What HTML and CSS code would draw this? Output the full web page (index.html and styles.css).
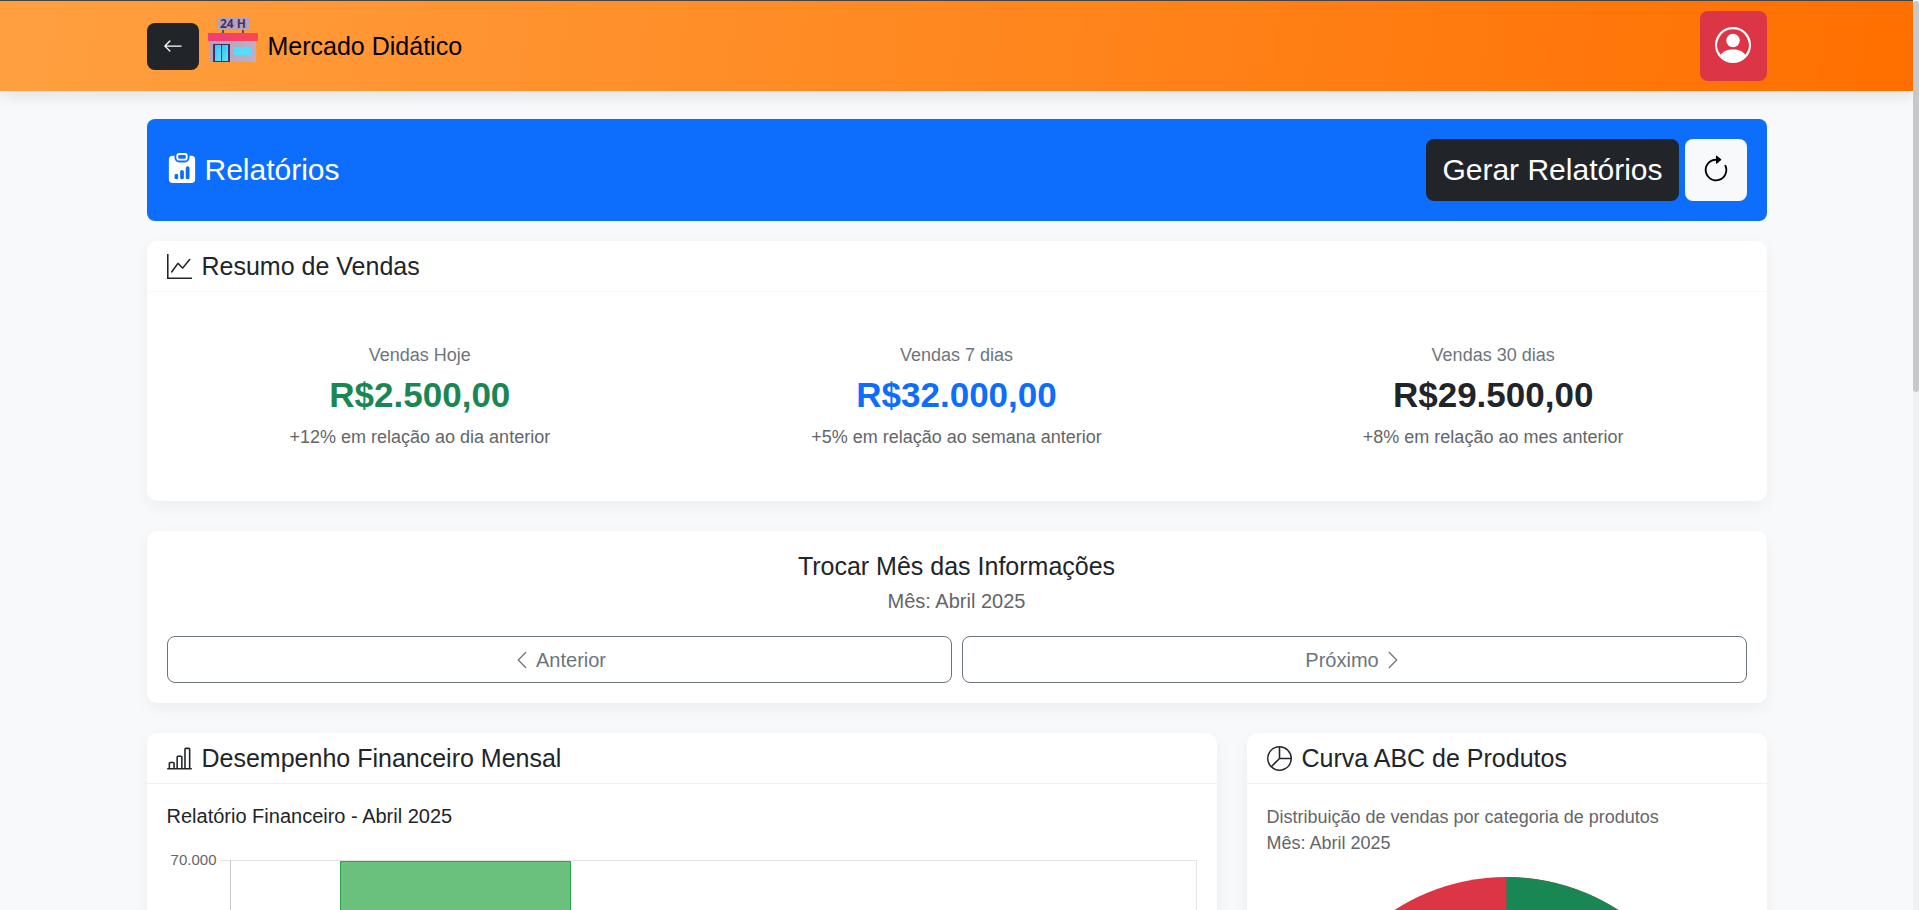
FILE: index.html
```html
<!DOCTYPE html>
<html lang="pt-BR">
<head>
<meta charset="utf-8">
<meta name="viewport" content="width=device-width, initial-scale=1">
<title>Mercado Didático - Relatórios</title>
<link rel="stylesheet" href="styles.css">
</head>
<body>
<header class="topbar">
  <div class="container topbar-inner">
    <button class="btn btn-dark btn-back" type="button" aria-label="Voltar">
      <svg class="icon" viewBox="0 0 16 16" aria-hidden="true"><path fill-rule="evenodd" d="M15 8a.5.5 0 0 0-.5-.5H2.707l3.147-3.146a.5.5 0 1 0-.708-.708l-4 4a.5.5 0 0 0 0 .708l4 4a.5.5 0 0 0 .708-.708L2.707 8.5H14.5A.5.5 0 0 0 15 8"/></svg>
    </button>
    <a class="brand" href="#">
      <svg class="brand-logo" viewBox="0 0 50 60" aria-hidden="true">
        <defs>
          <linearGradient id="roof"><stop offset="0" stop-color="#ee3c7d"/><stop offset="1" stop-color="#ff4653"/></linearGradient>
          <linearGradient id="wall"><stop offset="0" stop-color="#b3a2bd"/><stop offset="1" stop-color="#bfafc4"/></linearGradient>
          <linearGradient id="glass" x2="1" y2="1"><stop offset="0" stop-color="#35c3f3"/><stop offset="1" stop-color="#5fe3ff"/></linearGradient>
        </defs>
        <rect x="14" y="13" width="2" height="5" fill="#5b4a66"/>
        <rect x="34" y="13" width="2" height="5" fill="#5b4a66"/>
        <rect x="9" y="1" width="32" height="13" rx="1" fill="#b3a3b8"/>
        <text class="logo-text" x="25" y="12" text-anchor="middle">24 H</text>
        <rect x="2" y="23" width="46" height="23" fill="url(#wall)"/>
        <rect x="0" y="17" width="50" height="8" rx="1" fill="url(#roof)"/>
        <rect x="5" y="28" width="17" height="18" fill="#45306d"/>
        <rect x="7" y="29" width="6" height="16" fill="url(#glass)"/>
        <rect x="14" y="29" width="6" height="16" fill="url(#glass)"/>
        <rect x="26" y="31" width="17" height="8" rx="1" fill="#54dcfb"/>
      </svg>
      <span>Mercado Didático</span>
    </a>
    <button class="btn btn-user" type="button" aria-label="Perfil">
      <svg class="icon icon-user" viewBox="0 0 16 16" aria-hidden="true"><path d="M11 6a3 3 0 1 1-6 0 3 3 0 0 1 6 0"/><path fill-rule="evenodd" d="M0 8a8 8 0 1 1 16 0A8 8 0 0 1 0 8m8-7a7 7 0 0 0-5.468 11.37C3.242 11.226 4.805 10 8 10s4.757 1.225 5.468 2.37A7 7 0 0 0 8 1"/></svg>
    </button>
  </div>
</header>

<main class="container main">
  <section class="banner">
    <h1 class="banner-title">
      <svg class="icon icon-lg" viewBox="0 0 16 16" aria-hidden="true"><path d="M6.5 0A1.5 1.5 0 0 0 5 1.500v1A1.5 1.5 0 0 0 6.500 4h3A1.5 1.5 0 0 0 11 2.500v-1A1.5 1.5 0 0 0 9.500 0zm3 1a.5.5 0 0 1 .5.5v1a.5.5 0 0 1-.5.5h-3a.5.5 0 0 1-.5-.5v-1a.5.5 0 0 1 .5-.5z"/><path d="M4 1.500H3a2 2 0 0 0-2 2V14a2 2 0 0 0 2 2h10a2 2 0 0 0 2-2V3.500a2 2 0 0 0-2-2h-1v1A2.500 2.500 0 0 1 9.500 5h-3A2.500 2.500 0 0 1 4 2.500zM10 8a1 1 0 1 1 2 0v5a1 1 0 1 1-2 0zm-6 4a1 1 0 1 1 2 0v1a1 1 0 1 1-2 0zm4-3a1 1 0 0 1 1 1v3a1 1 0 1 1-2 0v-3a1 1 0 0 1 1-1"/></svg>
      Relatórios
    </h1>
    <div class="banner-actions">
      <button class="btn btn-dark btn-lg" type="button">Gerar Relatórios</button>
      <button class="btn btn-light btn-lg" type="button" aria-label="Atualizar">
        <svg class="icon icon-lg" viewBox="0 0 16 16" aria-hidden="true"><path fill-rule="evenodd" d="M8 3a5 5 0 1 0 4.546 2.914.5.5 0 0 1 .908-.417A6 6 0 1 1 8 2z"/><path d="M8 4.466V.534a.25.25 0 0 1 .41-.192l2.360 1.966c.12.1.12.284 0 .384L8.410 4.658A.25.25 0 0 1 8 4.466"/></svg>
      </button>
    </div>
  </section>

  <section class="card card-summary">
    <h2 class="card-header">
      <svg class="icon icon-md" viewBox="0 0 16 16" aria-hidden="true"><path fill-rule="evenodd" d="M0 0h1v15h15v1H0zm14.817 3.113a.5.5 0 0 1 .07.704l-4.500 5.500a.5.5 0 0 1-.74.037L7.060 6.767l-3.656 5.027a.5.5 0 0 1-.808-.588l4-5.500a.5.5 0 0 1 .758-.06l2.609 2.610 4.150-5.073a.5.5 0 0 1 .704-.07"/></svg>
      Resumo de Vendas
    </h2>
    <div class="stats">
      <div class="stat">
        <p class="stat-label">Vendas Hoje</p>
        <p class="stat-value green">R$2.500,00</p>
        <p class="stat-note">+12% em relação ao dia anterior</p>
      </div>
      <div class="stat">
        <p class="stat-label">Vendas 7 dias</p>
        <p class="stat-value blue">R$32.000,00</p>
        <p class="stat-note">+5% em relação ao semana anterior</p>
      </div>
      <div class="stat">
        <p class="stat-label">Vendas 30 dias</p>
        <p class="stat-value">R$29.500,00</p>
        <p class="stat-note">+8% em relação ao mes anterior</p>
      </div>
    </div>
  </section>

  <section class="card month">
    <h2 class="month-title">Trocar Mês das Informações</h2>
    <p class="month-current">Mês: Abril 2025</p>
    <div class="month-nav">
      <button class="btn btn-outline" type="button">
        <svg class="icon" viewBox="0 0 16 16" aria-hidden="true"><path fill-rule="evenodd" d="M11.354 1.646a.5.5 0 0 1 0 .708L5.707 8l5.647 5.646a.5.5 0 0 1-.708.708l-6-6a.5.5 0 0 1 0-.708l6-6a.5.5 0 0 1 .708 0"/></svg>
        Anterior
      </button>
      <button class="btn btn-outline" type="button">
        Próximo
        <svg class="icon" viewBox="0 0 16 16" aria-hidden="true"><path fill-rule="evenodd" d="M4.646 1.646a.5.5 0 0 1 .708 0l6 6a.5.5 0 0 1 0 .708l-6 6a.5.5 0 0 1-.708-.708L10.293 8 4.646 2.354a.5.5 0 0 1 0-.708"/></svg>
      </button>
    </div>
  </section>

  <div class="charts">
    <section class="card">
      <h2 class="card-header">
        <svg class="icon icon-md" viewBox="0 0 16 16" aria-hidden="true"><path d="M11 2a1 1 0 0 1 1-1h2a1 1 0 0 1 1 1v12h.5a.5.5 0 0 1 0 1H.5a.5.5 0 0 1 0-1H1v-3a1 1 0 0 1 1-1h2a1 1 0 0 1 1 1v3h1V7a1 1 0 0 1 1-1h2a1 1 0 0 1 1 1v7h1zm1 12h2V2h-2zm-3 0V7H7v7zm-5 0v-3H2v3z"/></svg>
        Desempenho Financeiro Mensal
      </h2>
      <div class="card-body">
        <h3 class="chart-title">Relatório Financeiro - Abril 2025</h3>
        <div class="bar-chart">
          <span class="axis-label">70.000</span>
          <span class="tick"></span>
          <div class="plot"><div class="bar"></div></div>
        </div>
      </div>
    </section>
    <section class="card">
      <h2 class="card-header">
        <svg class="icon icon-md" viewBox="0 0 16 16" aria-hidden="true"><path d="M7.500 1.018a7 7 0 0 0-4.790 11.566L7.500 7.793zm1 0V7.500h6.482A7 7 0 0 0 8.500 1.018M14.982 8.500H8.207l-4.790 4.790A7 7 0 0 0 14.982 8.500M0 8a8 8 0 1 1 16 0A8 8 0 0 1 0 8" fill-rule="evenodd"/></svg>
        Curva ABC de Produtos
      </h2>
      <div class="card-body">
        <p class="abc-text">Distribuição de vendas por categoria de produtos<br>Mês: Abril 2025</p>
        <svg class="pie" viewBox="0 0 400 400" role="img" aria-label="Curva ABC"><circle cx="200" cy="200" r="200" fill="#dc3545"/><path fill="#198754" d="M200 0A200 200 0 0 1 200 400Z"/></svg>
      </div>
    </section>
  </div>
</main>
<div class="scrollbar" aria-hidden="true"><div class="scrollbar-thumb"></div></div>
</body>
</html>
```

FILE: styles.css
```css
* {
  box-sizing: border-box;
}

html {
  height: 100%;
  overflow: hidden;
}

body {
  height: 100%;
  margin: 0;
  padding-right: 6px;
  overflow: hidden;
  background: #f8f9fa;
  color: #212529;
  font-family: "Liberation Sans", Arial, sans-serif;
  font-size: 20px;
  line-height: 30px;
}

h1, h2, h3, p {
  margin: 0;
  font-weight: 400;
}

.container {
  width: 100%;
  max-width: 1650px;
  margin: 0 auto;
  padding: 0 15px;
}

.icon {
  display: block;
  flex: none;
  width: 20px;
  height: 20px;
  fill: currentColor;
}

.icon-md {
  width: 25px;
  height: 25px;
}

.icon-lg {
  width: 30px;
  height: 30px;
}

.icon-user {
  width: 36px;
  height: 36px;
}

.topbar {
  border-top: 1px solid #444;
  background: linear-gradient(100deg, #ffa040, #ff6f00);
  box-shadow: 0 5px 15px rgba(0, 0, 0, 0.1);
}

.topbar-inner {
  display: flex;
  align-items: center;
  gap: 9px;
  padding-top: 10px;
  padding-bottom: 10px;
}

.brand {
  display: flex;
  flex: 1;
  align-items: center;
  gap: 10px;
  color: #000;
  font-size: 25px;
  text-decoration: none;
}

.brand-logo {
  width: 50px;
  height: 60px;
}

.logo-text {
  fill: #45306d;
  font-family: "Open Sans", sans-serif;
  font-size: 12px;
  font-weight: 700;
}

.btn {
  display: flex;
  align-items: center;
  justify-content: center;
  border: 1px solid transparent;
  border-radius: 8px;
  font: inherit;
  cursor: pointer;
}

.btn-dark {
  background: #212529;
  color: #fff;
}

.btn-light {
  background: #f8f9fa;
  color: #000;
}

.btn-back {
  height: 47px;
  padding: 0 15px;
}

.btn-user {
  width: 67px;
  height: 70px;
  padding: 0 0 3px;
  background: #dc3545;
  color: #fff;
}

.btn-lg {
  height: 62px;
  padding: 0 15px;
  font-size: 30px;
}

.btn-outline {
  flex: 1;
  gap: 4px;
  height: 47px;
  border-color: #6c757d;
  background: transparent;
  color: #6c757d;
}

.main {
  padding-top: 28px;
}

.banner {
  display: flex;
  align-items: center;
  justify-content: space-between;
  margin-bottom: 20px;
  padding: 20px;
  border-radius: 8px;
  background: #0d6efd;
  color: #fff;
}

.banner-title {
  display: flex;
  align-items: center;
  gap: 8px;
  font-size: 30px;
  line-height: 36px;
}

.banner-title .icon {
  margin-bottom: 4px;
}

.banner-actions {
  display: flex;
  gap: 6px;
}

.card {
  margin-bottom: 30px;
  border-radius: 10px;
  background: #fff;
  box-shadow: 0 5px 15px rgba(0, 0, 0, 0.05);
}

.card-header {
  display: flex;
  align-items: center;
  gap: 10px;
  padding: 10px 20px;
  border-bottom: 1px solid #eff0f0;
  font-size: 25px;
}

.card-summary .card-header {
  border-bottom-color: #f8f8f8;
}

.card-body {
  padding: 20px;
}

.stats {
  display: grid;
  grid-template-columns: repeat(3, 1fr);
  gap: 30px;
  padding: 50px 20px 51px;
  text-align: center;
}

.stat-label,
.stat-note {
  color: #6c757d;
  font-size: 18px;
  line-height: 26px;
}

.stat-note {
  color: #636669;
}

.stat-value {
  margin: 6px 0 8px;
  font-size: 35px;
  font-weight: 700;
  line-height: 42px;
}

.green {
  color: #198754;
}

.blue {
  color: #0d6efd;
}

.month {
  padding: 20px;
  text-align: center;
}

.month-title {
  font-size: 25px;
}

.month-current {
  margin: 5px 0 20px;
  color: #636669;
}

.month-nav {
  display: flex;
  gap: 10px;
}

.charts {
  display: grid;
  grid-template-columns: minmax(0, 1070fr) minmax(0, 520fr);
  gap: 30px;
}

.chart-title {
  margin-bottom: 22px;
  font-size: 20px;
  line-height: 24px;
}

.bar-chart {
  display: flex;
  align-items: flex-start;
  height: 440px;
  margin-top: 32px;
}

.axis-label {
  width: 53px;
  margin-top: -10px;
  padding-right: 3px;
  color: #666;
  font-size: 15px;
  line-height: 20px;
  text-align: right;
}

.tick {
  width: 10px;
  height: 1px;
  background: #e5e5e5;
}

.plot {
  flex: 1;
  height: 100%;
  border: 1px solid #e5e5e5;
  border-left-color: #c6c6c6;
}

.bar {
  width: 24%;
  height: 100%;
  margin-left: 11.3%;
  border: 1px solid #28a745;
  background: #69c17d;
}

.abc-text {
  margin-bottom: 21px;
  color: #636669;
  font-size: 18px;
  line-height: 26px;
}

.pie {
  display: block;
  width: 86%;
  margin: 0 auto;
}

.scrollbar {
  position: fixed;
  top: 1px;
  right: 0;
  bottom: 0;
  width: 6px;
  background: #f1f1f1;
}

.scrollbar-thumb {
  height: 43%;
  border-radius: 3px;
  background: #c8c8c8;
}
```
